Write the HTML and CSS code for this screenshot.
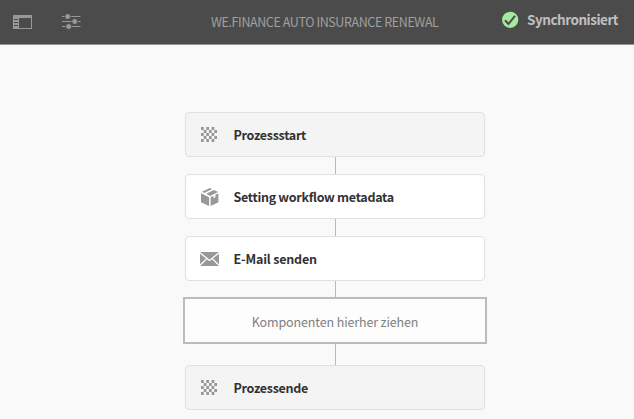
FILE: index.html
```html
<!DOCTYPE html>
<html lang="de">
<head>
<meta charset="utf-8">
<title>We.Finance Auto Insurance Renewal</title>
<link rel="stylesheet" href="styles.css">
</head>
<body>
<svg class="defs" width="0" height="0">
  <symbol id="checker" viewBox="0 0 16 15">
    <path d="M0 0h2.7v3H0zM5.3 0H8v3H5.3zM10.6 0h2.7v3h-2.7zM2.7 3h2.7v3H2.7zM8 3h2.7v3H8zM13.3 3H16v3h-2.7zM0 6h2.7v3H0zM5.3 6H8v3H5.3zM10.6 6h2.7v3h-2.7zM2.7 9h2.7v3H2.7zM8 9h2.7v3H8zM13.3 9H16v3h-2.7zM0 12h2.7v3H0zM5.3 12H8v3H5.3zM10.6 12h2.7v3h-2.7z"/>
  </symbol>
</svg>
<header class="bar">
  <div class="tools">
    <svg width="19" height="16" viewBox="0 0 19 16"><path fill-rule="evenodd" d="M0 1h19v14H0zM6 4v10h12V4z"/><path class="cut" d="M1 5h4v1H1zM1 8h4v1H1zM1 11h4v1H1z"/></svg>
    <svg width="19" height="16" viewBox="0 0 19 16"><path d="M0 2h18.5v1H0zM0 7h18.5v1H0zM0 12h18.5v1H0z"/><g class="knob"><circle cx="5.7" cy="2.5" r="3"/><circle cx="12.7" cy="7.5" r="3"/><circle cx="6.7" cy="12.5" r="3"/></g></svg>
  </div>
  <h1 class="title">WE.FINANCE AUTO INSURANCE RENEWAL</h1>
  <div class="status">
    <svg width="17" height="17" viewBox="0 0 17 17"><circle cx="8.2" cy="8.8" r="8.1"/><path d="M3 9.3l3.4 3.7L13 4.8"/></svg>
    <span>Synchronisiert</span>
  </div>
</header>
<main class="flow">
  <div class="step end"><svg class="icon" width="16" height="15"><use href="#checker"/></svg><span>Prozessstart</span></div>
  <i class="line"></i>
  <div class="step"><svg class="icon" width="18" height="18" viewBox="0 0 18 18"><path d="M1 3.8 8.9 0l2.2 1-7.8 4zM5.2 5.8 13 2l4 1.9-8 4zM0 5.3l8.1 3.9V18L0 14.2zM9.6 9.2l2.8-1.4v2.5l2-1V6.8l3-1.5v8.9L9.6 18z"/></svg><span>Setting workflow metadata</span></div>
  <i class="line"></i>
  <div class="step"><svg class="icon" width="19" height="14" viewBox="0 0 19 14"><path d="M0 0h19v14H0z"/><path class="fold" d="M0 .8 9.5 8.5 19 .8M0 13.2l6.8-6.6M19 13.2l-6.8-6.6"/></svg><span class="mail">E-Mail senden</span></div>
  <i class="line short"></i>
  <div class="drop"><span>Komponenten hierher ziehen</span></div>
  <i class="line long"></i>
  <div class="step end"><svg class="icon" width="16" height="15"><use href="#checker"/></svg><span>Prozessende</span></div>
</main>
</body>
</html>
```

FILE: styles.css
```css
* { box-sizing: border-box; }
body {
  margin: 0;
  height: 419px;
  overflow: hidden;
  background: #f9f9f9;
  font-family: "Noto Sans CJK SC", "Open Sans", sans-serif;
}
.defs { display: block; height: 0; }
.bar {
  height: 45px;
  background: #4b4b4b;
  border-bottom: 1px solid #969696;
  display: grid;
  grid-template-columns: 211px 228px 1fr;
  white-space: nowrap;
}
.tools { display: flex; gap: 30px; padding: 14px 0 0 13px; fill: #989898; }
.tools .cut { fill: #4b4b4b; }
.knob { stroke: #4b4b4b; stroke-width: 1; }
.title { margin: 0; padding-top: 12px; font-size: 12.5px; letter-spacing: -.4px; line-height: 20px; font-weight: 400; color: #a0a0a0; }
.status { display: flex; gap: 8px; padding: 11px 0 0 63px; font-size: 13.5px; letter-spacing: -.48px; line-height: 16px; font-weight: 700; color: #c0c0c0; }
.status circle { fill: #a0eba0; }
.status path { fill: none; stroke: #4b4b4b; stroke-width: 2; }
.flow { display: flex; flex-direction: column; align-items: center; width: 300px; margin: 67px 0 0 185px; }
.step {
  width: 300px;
  height: 45px;
  flex: none;
  display: grid;
  grid-template-columns: 47.5px 1fr;
  align-items: center;
  background: #fff;
  border: 1px solid #e0e0e0;
  border-radius: 4px;
  font-size: 12.5px;
  letter-spacing: -.3px;
  font-weight: 700;
  line-height: 20px;
  color: #323232;
  white-space: nowrap;
}
.end { background: #f4f4f4; }
.icon { fill: #989898; justify-self: center; }
.end .icon { justify-self: start; margin-left: 15px; }
.mail { letter-spacing: -.18px; }
.fold { fill: none; stroke: #fff; stroke-width: 1.3; }
.line { width: 1px; height: 17px; background: #b9b9b9; flex: none; margin-left: 1px; }
.short { height: 16px; }
.long { height: 21px; }
.drop {
  width: 304px;
  height: 47px;
  flex: none;
  border: 2px solid #bcbcbc;
  background: #fdfdfd;
  display: flex;
  align-items: center;
  justify-content: center;
  padding-top: 2px;
  font-size: 12.5px;
  letter-spacing: -.13px;
  line-height: 20px;
  color: #808080;
}
```
